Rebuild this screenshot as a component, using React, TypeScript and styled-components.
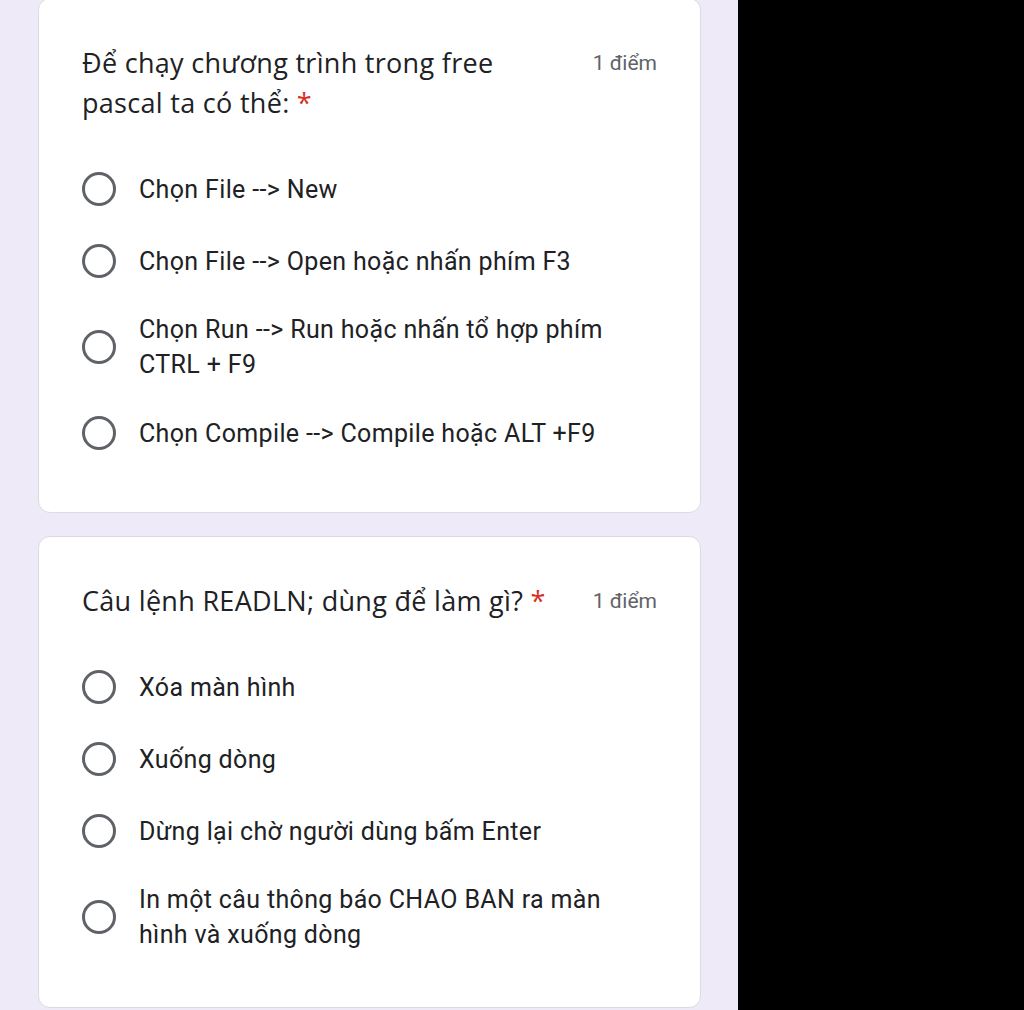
import React from "react";
import styled, { createGlobalStyle } from "styled-components";

const Global = createGlobalStyle`
  html, body { margin: 0; padding: 0; background: #000; }
  body { font-family: Roboto, "Noto Sans", sans-serif; overflow: hidden; }
`;

const Screen = styled.div`
  display: flex;
  width: 1024px;
  height: 1010px;
  overflow: hidden;
`;

const Page = styled.div`
  width: 738px;
  flex: none;
  background: #eeeaf7;
  padding: 0 37px 0 38px;
  box-sizing: border-box;
  display: flex;
  flex-direction: column;
  gap: 23px;
`;

const Side = styled.div`
  flex: 1;
  background: #000;
`;

const Card = styled.section<{ $top?: number }>`
  background: #fff;
  border: 1px solid #dadce0;
  border-radius: 12px;
  margin-top: ${(p) => p.$top ?? 0}px;
  padding: 44px 43px ${(p) => (p.$top ? 43 : 40)}px 43px;
  display: flex;
  flex-direction: column;
  flex: none;
`;

const Header = styled.div`
  display: flex;
  align-items: flex-start;
  justify-content: space-between;
  gap: 24px;
  margin-bottom: 30px;
`;

const Title = styled.div`
  font-family: "Open Sans", sans-serif;
  font-size: 27px;
  line-height: 40px;
  color: #202124;
  letter-spacing: 0.3px;
  max-width: 478px;
`;

const Star = styled.span`
  color: #d93025;
`;

const Points = styled.div`
  font-family: Roboto, sans-serif;
  font-size: 21px;
  line-height: 40px;
  color: #5f6368;
  white-space: nowrap;
`;

const Option = styled.label`
  display: flex;
  align-items: center;
  min-height: 72px;
  padding: 15px 0;
  box-sizing: border-box;
  gap: 23px;
`;

const Radio = styled.span`
  width: 34px;
  height: 34px;
  border: 3px solid #5f6368;
  border-radius: 50%;
  box-sizing: border-box;
  flex: none;
`;

const OptionText = styled.span`
  font-family: Roboto, sans-serif;
  font-size: 25px;
  line-height: 35px;
  letter-spacing: 0.35px;
  color: #202124;
  max-width: 480px;
`;

type Q = { title: string; options: string[] };

const questions: Q[] = [
  {
    title: "Để chạy chương trình trong free pascal ta có thể:",
    options: [
      "Chọn File --> New",
      "Chọn File --> Open hoặc nhấn phím F3",
      "Chọn Run --> Run hoặc nhấn tổ hợp phím CTRL + F9",
      "Chọn Compile --> Compile hoặc ALT +F9",
    ],
  },
  {
    title: "Câu lệnh READLN; dùng để làm gì?",
    options: [
      "Xóa màn hình",
      "Xuống dòng",
      "Dừng lại chờ người dùng bấm Enter",
      "In một câu thông báo CHAO BAN ra màn hình và xuống dòng",
    ],
  },
];

export default function App() {
  return (
    <Screen>
      <Global />
      <Page>
        {questions.map((q, i) => (
          <Card key={i} $top={i === 0 ? -2 : 0}>
            <Header>
              <Title>
                {q.title} <Star>*</Star>
              </Title>
              <Points>1 điểm</Points>
            </Header>
            {q.options.map((o) => (
              <Option key={o}>
                <Radio />
                <OptionText>{o}</OptionText>
              </Option>
            ))}
          </Card>
        ))}
      </Page>
      <Side />
    </Screen>
  );
}
